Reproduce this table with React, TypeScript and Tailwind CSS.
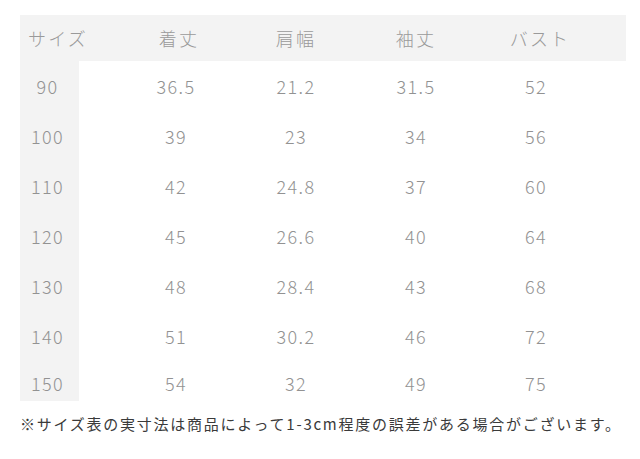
import React from "react";

const rows = [
  ["90", "36.5", "21.2", "31.5", "52"],
  ["100", "39", "23", "34", "56"],
  ["110", "42", "24.8", "37", "60"],
  ["120", "45", "26.6", "40", "64"],
  ["130", "48", "28.4", "43", "68"],
  ["140", "51", "30.2", "46", "72"],
  ["150", "54", "32", "49", "75"],
];

const font = { fontFamily: '"Noto Sans CJK JP", "Noto Sans", sans-serif' };

export default function App() {
  return (
    <div className="w-[640px] h-[459px] bg-white" style={font}>
      <div className="pt-[15px] pl-[20px]">
        <div className="w-[606px] flex flex-col">
          <div className="h-[46px] bg-[#f3f3f3] flex items-center text-[18px] font-light text-[#9a9a9a] tracking-[0.12em]">
            <div className="w-[96px] pl-[8px] whitespace-nowrap">サイズ</div>
            <div className="w-[120px] text-center pl-[6px]">着丈</div>
            <div className="w-[120px] text-center">肩幅</div>
            <div className="w-[120px] text-center">袖丈</div>
            <div className="w-[120px] text-center pl-[8px]">バスト</div>
          </div>
          {rows.map((r, i) => (
            <div
              key={r[0]}
              className={`flex items-stretch text-[18px] font-light text-[#929292] tracking-[0.08em] ${
                i === rows.length - 1 ? "h-[40px]" : "h-[50px]"
              }`}
            >
              <div
                className={`w-[59px] bg-[#f3f3f3] flex justify-center pr-[4px] ${
                  i === rows.length - 1 ? "items-center pt-[4px]" : "items-center"
                }`}
              >
                {r[0]}
              </div>
              <div className="w-[37px]" />
              {r.slice(1).map((v, j) => (
                <div
                  key={j}
                  className={`w-[120px] flex justify-center ${
                    i === rows.length - 1 ? "items-center pt-[4px]" : "items-center"
                  }`}
                >
                  {v}
                </div>
              ))}
            </div>
          ))}
        </div>
        <div className="mt-[12px] text-[15px] text-[#3a3a3a] tracking-[1.75px] whitespace-nowrap leading-[22px]">
          ※サイズ表の実寸法は商品によって1-3cm程度の誤差がある場合がございます。
        </div>
      </div>
    </div>
  );
}
